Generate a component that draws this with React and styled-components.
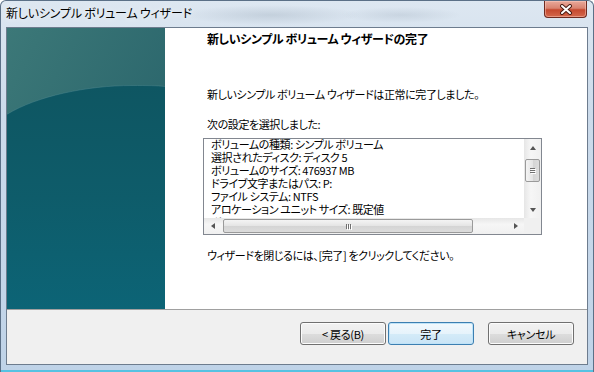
import React from "react";
import styled, { createGlobalStyle } from "styled-components";

const GlobalStyle = createGlobalStyle`
  html, body {
    margin: 0;
    padding: 0;
    background: #ffffff;
  }
  body {
    font-family: "Noto Sans CJK JP", "Liberation Sans", sans-serif;
    font-size: 11px;
    color: #000;
  }
`;

const Window = styled.div`
  width: 594px;
  height: 372px;
  box-sizing: border-box;
  display: flex;
  flex-direction: column;
  border: 1px solid #5b7087;
  border-bottom: none;
  border-radius: 6px 6px 0 0;
  overflow: hidden;
  background:
    radial-gradient(ellipse 90px 10px at 270px 14px, rgba(90, 110, 130, 0.18), transparent),
    radial-gradient(ellipse 60px 8px at 400px 14px, rgba(90, 110, 130, 0.14), transparent),
    linear-gradient(180deg, #dde7f1 0%, #ccdbeb 30%, #bfd3e8 100%);
  box-shadow: inset 0 -2px 0 #56c2e2;
`;

const TitleBar = styled.div`
  height: 26px;
  display: flex;
  align-items: flex-start;
  flex-shrink: 0;
`;

const TitleText = styled.div`
  padding: 5px 0 0 5px;
  font-size: 12px;
  line-height: 14px;
  letter-spacing: -0.2px;
  font-feature-settings: "palt";
  color: #000;
  text-shadow: 0 0 6px rgba(255, 255, 255, 0.9);
`;

const CloseButton = styled.div`
  margin-left: auto;
  margin-right: 6px;
  width: 43px;
  height: 17px;
  box-sizing: border-box;
  border: 1px solid #6e2a20;
  border-top: none;
  border-radius: 0 0 4px 4px;
  background: linear-gradient(180deg, #e9a99a 0%, #d98370 45%, #c5492f 55%, #d4684c 100%);
  box-shadow: inset 0 0 0 1px rgba(255, 210, 200, 0.45);
  display: flex;
  align-items: center;
  justify-content: center;
`;

const Client = styled.div`
  flex: 1;
  margin: 0 5px 7px 5px;
  border: 1px solid #6d7c8e;
  background: #ffffff;
  display: flex;
  flex-direction: column;
  min-height: 0;
`;

const Body = styled.div`
  flex: 1;
  display: flex;
  min-height: 0;
`;

const SideArt = styled.svg`
  width: 158px;
  height: 100%;
  flex-shrink: 0;
  display: block;
`;

const Content = styled.div`
  flex: 1;
  padding: 4px 0 0 42px;
  display: flex;
  flex-direction: column;
  font-feature-settings: "palt";
`;

const Heading = styled.div`
  font-weight: bold;
  font-size: 12px;
  line-height: 14px;
  letter-spacing: -0.4px;
`;

const Para = styled.div`
  font-size: 11px;
  line-height: 14px;
  letter-spacing: -0.4px;
  margin-top: ${(p) => p.$gap}px;
`;

const ListBox = styled.div`
  margin: 7px 0 0 -4px;
  width: 339px;
  height: 97px;
  box-sizing: border-box;
  border: 1px solid #828790;
  display: grid;
  grid-template-columns: minmax(0, 1fr) 17px;
  grid-template-rows: minmax(0, 1fr) 16px;
  grid-template-areas:
    "lines vbar"
    "hbar corner";
  overflow: hidden;
`;

const ListLines = styled.div`
  grid-area: lines;
  overflow: hidden;
  min-height: 0;
  padding: 0 0 0 7px;
  font-size: 11px;
  line-height: 13px;
  letter-spacing: -0.4px;
  white-space: nowrap;
`;

const LinesInner = styled.div`
  margin-top: -1px;
`;

const VScroll = styled.div`
  grid-area: vbar;
  background: linear-gradient(90deg, #e6e6e6, #f6f6f6 40%, #f0f0f0);
  display: flex;
  flex-direction: column;
  align-items: center;
  min-height: 0;
  overflow: hidden;
`;

const HScroll = styled.div`
  grid-area: hbar;
  background: linear-gradient(180deg, #e6e6e6, #f6f6f6 40%, #f0f0f0);
  display: flex;
  align-items: center;
  min-width: 0;
`;

const Corner = styled.div`
  grid-area: corner;
  background: #f0f0f0;
`;

const ArrowCell = styled.div`
  width: 17px;
  height: ${(p) => (p.$short ? 16 : 17)}px;
  flex-shrink: 0;
  display: flex;
  align-items: center;
  justify-content: center;
`;

const Arrow = styled.div`
  width: 0;
  height: 0;
  border-style: solid;
  ${(p) =>
    p.$dir === "up"
      ? "border-width: 0 3px 4px 3px; border-color: transparent transparent #555 transparent;"
      : p.$dir === "down"
      ? "border-width: 4px 3px 0 3px; border-color: #555 transparent transparent transparent;"
      : p.$dir === "left"
      ? "border-width: 3px 4px 3px 0; border-color: transparent #555 transparent transparent;"
      : "border-width: 3px 0 3px 4px; border-color: transparent transparent transparent #555;"}
`;

const VThumb = styled.div`
  margin-top: 3px;
  width: 15px;
  height: 23px;
  flex-shrink: 0;
  box-sizing: border-box;
  border: 1px solid #9a9a9a;
  border-radius: 2px;
  background: linear-gradient(90deg, #f4f4f4, #e4e4e4 50%, #d4d4d4 51%, #dcdcdc);
  display: flex;
  flex-direction: column;
  align-items: center;
  justify-content: center;
  gap: 1px;
`;

const HThumb = styled.div`
  margin-left: 2px;
  width: 250px;
  height: 14px;
  flex-shrink: 0;
  box-sizing: border-box;
  border: 1px solid #9a9a9a;
  border-radius: 2px;
  background: linear-gradient(180deg, #f4f4f4, #e4e4e4 50%, #d4d4d4 51%, #dcdcdc);
  display: flex;
  align-items: center;
  justify-content: center;
  gap: 1px;
`;

const Grip = styled.span`
  display: block;
  background: #6f6f6f;
  width: ${(p) => (p.$h ? "5px" : "1px")};
  height: ${(p) => (p.$h ? "1px" : "5px")};
  box-shadow: 1px 1px 0 #fff;
`;

const Spacer = styled.div`
  flex: 1;
`;

const Footer = styled.div`
  height: 42px;
  flex-shrink: 0;
  border-top: 1px solid #a0a0a0;
  background: #f0f0f0;
  display: flex;
  align-items: flex-start;
  justify-content: flex-end;
  padding: 12px 13px 0 0;
  box-sizing: content-box;
`;

const Button = styled.button`
  width: 86px;
  height: 23px;
  margin-left: ${(p) => p.$gap}px;
  box-sizing: border-box;
  border: 1px solid ${(p) => (p.$default ? "#3c7fb1" : "#707070")};
  border-radius: 3px;
  padding: 0;
  font-family: "Noto Sans CJK JP", "Liberation Sans", sans-serif;
  font-size: 11px;
  letter-spacing: -0.3px;
  font-feature-settings: "palt";
  color: #000;
  background: ${(p) =>
    p.$default
      ? "linear-gradient(180deg, #f2f9fd 0%, #e6f3fb 50%, #d4ebf8 51%, #c9e4f6 100%)"
      : "linear-gradient(180deg, #f2f2f2 0%, #ebebeb 50%, #dddddd 51%, #cfcfcf 100%)"};
  box-shadow: inset 0 0 0 1px ${(p) => (p.$default ? "#bfe3f8" : "#fcfcfc")};
`;

const settings = [
  "ボリュームの種類: シンプル ボリューム",
  "選択されたディスク: ディスク 5",
  "ボリュームのサイズ: 476937 MB",
  "ドライブ文字またはパス: P:",
  "ファイル システム: NTFS",
  "アロケーション ユニット サイズ: 既定値",
  "ボリューム ラベル: Portable HDD",
];

const Sidebar = () => (
  <SideArt viewBox="0 0 158 293" preserveAspectRatio="none">
    <defs>
      <linearGradient id="topg" x1="0" y1="0" x2="1" y2="1">
        <stop offset="0" stopColor="#3c7878" />
        <stop offset="1" stopColor="#235e67" />
      </linearGradient>
      <linearGradient id="botg" x1="0" y1="0" x2="0" y2="1">
        <stop offset="0" stopColor="#0e5662" />
        <stop offset="0.5" stopColor="#0e5c6a" />
        <stop offset="1" stopColor="#0c6476" />
      </linearGradient>
    </defs>
    <rect x="0" y="0" width="158" height="293" fill="url(#topg)" />
    <path d="M0 90 C30 71 80 60 125 60 C140 60 150 60 158 61 L158 293 L0 293 Z" fill="url(#botg)" />
    <path d="M0 90 C30 71 80 60 125 60 C140 60 150 60 158 61" fill="none" stroke="rgba(110,160,165,0.3)" strokeWidth="1" />
  </SideArt>
);

export default function App() {
  return (
    <>
      <GlobalStyle />
      <Window>
        <TitleBar>
          <TitleText>新しいシンプル ボリューム ウィザード</TitleText>
          <CloseButton>
            <svg width="14" height="11" viewBox="0 0 14 11">
              <path d="M3 2 L11 9 M11 2 L3 9" stroke="#4a1c14" strokeWidth="4" strokeLinecap="round" />
              <path d="M3 2 L11 9 M11 2 L3 9" stroke="#ffffff" strokeWidth="2" strokeLinecap="round" />
            </svg>
          </CloseButton>
        </TitleBar>
        <Client>
          <Body>
            <Sidebar />
            <Content>
              <Heading>新しいシンプル ボリューム ウィザードの完了</Heading>
              <Para $gap={41}>新しいシンプル ボリューム ウィザードは正常に完了しました。</Para>
              <Para $gap={16}>次の設定を選択しました:</Para>
              <ListBox>
                <ListLines>
                  <LinesInner>
                    {settings.map((s) => (
                      <div key={s}>{s}</div>
                    ))}
                  </LinesInner>
                </ListLines>
                <VScroll>
                  <ArrowCell>
                    <Arrow $dir="up" />
                  </ArrowCell>
                  <VThumb>
                    <Grip $h />
                    <Grip $h />
                    <Grip $h />
                  </VThumb>
                  <Spacer />
                  <ArrowCell>
                    <Arrow $dir="down" />
                  </ArrowCell>
                </VScroll>
                <HScroll>
                  <ArrowCell $short>
                    <Arrow $dir="left" />
                  </ArrowCell>
                  <HThumb>
                    <Grip />
                    <Grip />
                    <Grip />
                  </HThumb>
                  <Spacer />
                  <ArrowCell $short>
                    <Arrow $dir="right" />
                  </ArrowCell>
                </HScroll>
                <Corner />
              </ListBox>
              <Para $gap={13}>ウィザードを閉じるには、[完了] をクリックしてください。</Para>
            </Content>
          </Body>
          <Footer>
            <Button $gap={0}>&lt; 戻る(B)</Button>
            <Button $gap={2} $default>完了</Button>
            <Button $gap={14}>キャンセル</Button>
          </Footer>
        </Client>
      </Window>
    </>
  );
}
